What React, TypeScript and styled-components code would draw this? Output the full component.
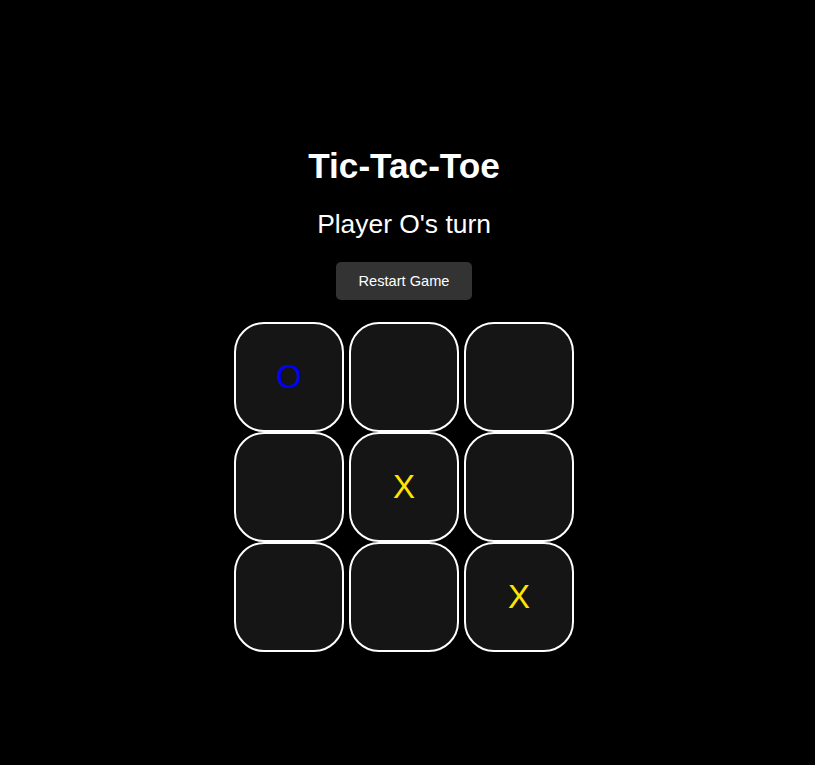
import React, { useState } from "react";
import styled, { createGlobalStyle } from "styled-components";

const GlobalStyle = createGlobalStyle`
  html, body {
    margin: 0;
    padding: 0;
    background: #000;
  }
  body {
    font-family: "Liberation Sans", Arial, sans-serif;
    color: #fff;
  }
`;

const Page = styled.div`
  display: flex;
  flex-direction: column;
  align-items: center;
  padding: 146px 7px 0 0;
  min-height: 100vh;
  box-sizing: border-box;
`;

const Title = styled.h1`
  margin: 0;
  font-size: 35.2px;
  font-weight: 700;
  line-height: 40px;
  color: #fff;
`;

const Status = styled.div`
  margin-top: 23px;
  font-size: 26.4px;
  line-height: 30px;
  color: #fff;
`;

const RestartButton = styled.button`
  margin-top: 23px;
  width: 136px;
  height: 38px;
  padding: 0;
  border: none;
  border-radius: 5px;
  background: #333333;
  color: #fff;
  font-family: "Liberation Sans", Arial, sans-serif;
  font-size: 14.6px;
  cursor: pointer;
`;

const Board = styled.div`
  margin-top: 22px;
  display: grid;
  grid-template-columns: repeat(3, 110px);
  grid-auto-rows: 110px;
  column-gap: 5px;
  row-gap: 0;
`;

const Cell = styled.button<{ $mark: string }>`
  box-sizing: border-box;
  width: 110px;
  height: 110px;
  padding: 0;
  border: 2px solid #fff;
  border-radius: 30px;
  background: #151515;
  display: flex;
  align-items: center;
  justify-content: center;
  font-family: "Liberation Sans", Arial, sans-serif;
  font-size: 33px;
  color: ${(p) => (p.$mark === "X" ? "#ffe600" : "#0000ff")};
  cursor: pointer;
`;

const initial = ["O", "", "", "", "X", "", "", "", "X"];

export default function App() {
  const [cells, setCells] = useState<string[]>(initial);
  const xCount = cells.filter((c) => c === "X").length;
  const oCount = cells.filter((c) => c === "O").length;
  const turn = xCount > oCount ? "O" : "X";

  return (
    <>
      <GlobalStyle />
      <Page>
        <Title>Tic-Tac-Toe</Title>
        <Status>Player {turn}'s turn</Status>
        <RestartButton onClick={() => setCells(Array(9).fill(""))}>
          Restart Game
        </RestartButton>
        <Board>
          {cells.map((c, i) => (
            <Cell
              key={i}
              $mark={c}
              onClick={() => {
                if (c) return;
                const next = cells.slice();
                next[i] = turn;
                setCells(next);
              }}
            >
              {c}
            </Cell>
          ))}
        </Board>
      </Page>
    </>
  );
}
